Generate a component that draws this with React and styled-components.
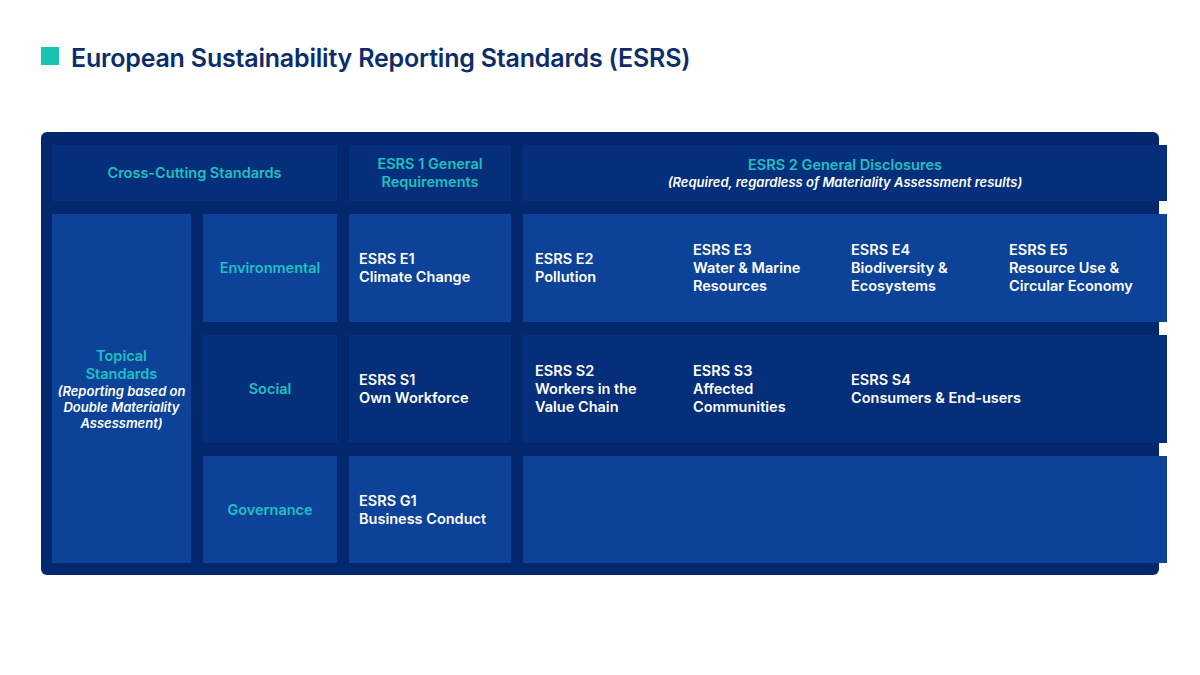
import React from 'react';
import styled, {createGlobalStyle} from 'styled-components';

const Global = createGlobalStyle`
    body {
        margin: 0;
        background: #fff;
        font-family: Inter, "Noto Sans", sans-serif;
    }
`;

const Page = styled.div`
    width: 1200px;
    height: 675px;
    padding: 42px 41px 0;
    box-sizing: border-box;
`;

const Title = styled.h1`
    display: flex;
    align-items: center;
    gap: 12px;
    margin: 0 0 58px;
    font-size: 25px;
    font-weight: 600;
    color: #0c2d6b;
    letter-spacing: -0.2px;
    height: 32px;

    &::before {
        content: '';
        width: 18px;
        height: 18px;
        background: #19c3b1;
        margin-top: -4px;
    }
`;

const Board = styled.div`
    display: grid;
    grid-template-columns: 139px 134px 162px 1fr;
    grid-template-rows: 56px 108px 108px 107px;
    column-gap: 12px;
    row-gap: 13px;
    padding: 13px 12px 12px 11px;
    background: #03286e;
    border-radius: 6px;
    width: 1118px;
    box-sizing: border-box;
`;

const Cell = styled.div`
    background: ${p => (p.$light ? '#0c4399' : '#052f7a')};
    color: ${p => (p.$teal ? '#1fc0c0' : '#fff')};
    font-size: 14.5px;
    font-weight: 600;
    line-height: 18px;
    display: flex;
    flex-direction: column;
    justify-content: center;
    align-items: ${p => (p.$center ? 'center' : 'flex-start')};
    text-align: ${p => (p.$center ? 'center' : 'left')};
    padding: 0 ${p => (p.$center ? '4px' : '10px')};
    grid-column: ${p => p.$span || 'auto'};
    grid-row: ${p => p.$rows || 'auto'};
`;

const Note = styled.span`
    font-style: italic;
    font-size: 13px;
    line-height: 16px;
    color: #fff;
`;

const Sub = styled.div`
    background: ${p => (p.$light ? '#0c4399' : '#052f7a')};
    display: grid;
    grid-template-columns: repeat(4, 158px);
    align-items: center;
    padding-left: 12px;
`;

const Item = styled.div`
    color: #fff;
    font-size: 14.5px;
    font-weight: 600;
    line-height: 18px;
`;

const Std = ({lines}) => (
    <Item>{lines.map((l, i) => <div key={i}>{l}</div>)}</Item>
);

export default function App() {
    return (
        <Page>
            <Global/>
            <Title>European Sustainability Reporting Standards (ESRS)</Title>
            <Board>
                <Cell $span="1 / 3" $teal $center>Cross-Cutting Standards</Cell>
                <Cell $teal $center>ESRS 1 General<br/>Requirements</Cell>
                <Cell $teal $center>
                    ESRS 2 General Disclosures
                    <Note>(Required, regardless of Materiality Assessment results)</Note>
                </Cell>

                <Cell $light $teal $center $rows="2 / 5">
                    Topical<br/>Standards
                    <Note>(Reporting based on Double Materiality Assessment)</Note>
                </Cell>
                <Cell $light $teal $center>Environmental</Cell>
                <Cell $light>ESRS E1<br/>Climate Change</Cell>
                <Sub $light>
                    <Std lines={['ESRS E2', 'Pollution']}/>
                    <Std lines={['ESRS E3', 'Water & Marine', 'Resources']}/>
                    <Std lines={['ESRS E4', 'Biodiversity &', 'Ecosystems']}/>
                    <Std lines={['ESRS E5', 'Resource Use &', 'Circular Economy']}/>
                </Sub>

                <Cell $teal $center>Social</Cell>
                <Cell>ESRS S1<br/>Own Workforce</Cell>
                <Sub>
                    <Std lines={['ESRS S2', 'Workers in the', 'Value Chain']}/>
                    <Std lines={['ESRS S3', 'Affected', 'Communities']}/>
                    <Item style={{gridColumn: '3 / 5'}}>
                        <div>ESRS S4</div>
                        <div>Consumers &amp; End-users</div>
                    </Item>
                </Sub>

                <Cell $light $teal $center>Governance</Cell>
                <Cell $light>ESRS G1<br/>Business Conduct</Cell>
                <Sub $light/>
            </Board>
        </Page>
    );
}
